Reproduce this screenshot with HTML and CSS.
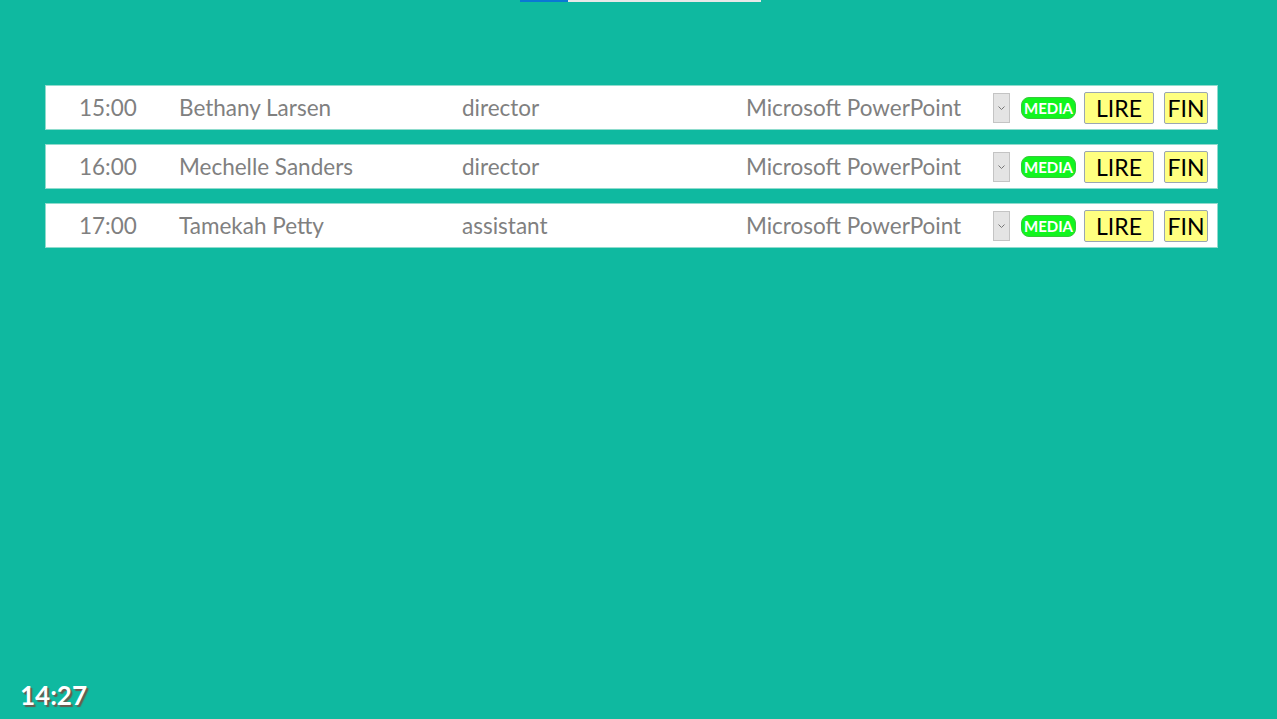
FILE: index.html
```html
<!DOCTYPE html>
<html>
<head>
<meta charset="utf-8">
<link rel="stylesheet" href="styles.css">
</head>
<body>
<div class="page">
  <div class="progress"><div class="done"></div><div class="rest"></div></div>
  <div class="list">
    <div class="row">
      <div class="time">15:00</div>
      <div class="name">Bethany Larsen</div>
      <div class="role">director</div>
      <div class="app">Microsoft PowerPoint</div>
      <div class="select"><svg width="9" height="6" viewBox="0 0 9 6"><path d="M1.5 1.5 L4.5 4.5 L7.5 1.5" fill="none" stroke="#777" stroke-width="1"/></svg></div>
      <div class="media">MEDIA</div>
      <div class="btn lire">LIRE</div>
      <div class="btn fin">FIN</div>
    </div>
    <div class="row">
      <div class="time">16:00</div>
      <div class="name">Mechelle Sanders</div>
      <div class="role">director</div>
      <div class="app">Microsoft PowerPoint</div>
      <div class="select"><svg width="9" height="6" viewBox="0 0 9 6"><path d="M1.5 1.5 L4.5 4.5 L7.5 1.5" fill="none" stroke="#777" stroke-width="1"/></svg></div>
      <div class="media">MEDIA</div>
      <div class="btn lire">LIRE</div>
      <div class="btn fin">FIN</div>
    </div>
    <div class="row">
      <div class="time">17:00</div>
      <div class="name">Tamekah Petty</div>
      <div class="role">assistant</div>
      <div class="app">Microsoft PowerPoint</div>
      <div class="select"><svg width="9" height="6" viewBox="0 0 9 6"><path d="M1.5 1.5 L4.5 4.5 L7.5 1.5" fill="none" stroke="#777" stroke-width="1"/></svg></div>
      <div class="media">MEDIA</div>
      <div class="btn lire">LIRE</div>
      <div class="btn fin">FIN</div>
    </div>
  </div>
  <div class="clock">14:27</div>
</div>
</body>
</html>
```
FILE: styles.css
```css
html, body {
  margin: 0;
  padding: 0;
  background: #0fb9a0;
}
.page {
  height: 719px;
  display: flex;
  flex-direction: column;
  font-family: "Lato", "Open Sans", sans-serif;
}
.progress {
  display: flex;
  height: 2px;
  margin-left: 520px;
  width: 241px;
}
.progress .done {
  width: 48px;
  background: #0a78d4;
}
.progress .rest {
  flex: 1;
  background: #e8e8e8;
}
.list {
  margin: 83px 59px 0 45px;
  display: flex;
  flex-direction: column;
  gap: 14px;
}
.row {
  height: 43px;
  background: #fff;
  border: 1px solid #8fdccd;
  display: flex;
  align-items: center;
  color: #808080;
  font-size: 22.5px;
  padding-right: 9px;
}
.time {
  width: 100px;
  padding-left: 33px;
}
.name {
  width: 283px;
}
.role {
  width: 284px;
}
.app {
  flex: 1;
}
.select {
  width: 15px;
  height: 28px;
  background: #e4e4e4;
  border: 1px solid #c4c4c4;
  display: flex;
  align-items: center;
  justify-content: center;
  margin-right: 11px;
}
.media {
  background: #11f51e;
  color: #fff;
  font-weight: 700;
  font-size: 15px;
  border-radius: 8px;
  border: 1px solid #38c93c;
  height: 20px;
  line-height: 20px;
  width: 53px;
  text-align: center;
  margin-right: 8px;
}
.btn {
  background: #ffff80;
  border: 1px solid #9aa6b2;
  border-radius: 2px;
  color: #000;
  height: 30px;
  line-height: 30px;
  text-align: center;
  font-size: 23px;
}
.lire {
  width: 68px;
  margin-right: 10px;
}
.fin {
  width: 42px;
}
.clock {
  margin-top: auto;
  margin-left: 20px;
  margin-bottom: 8px;
  color: #fff;
  font-weight: 700;
  font-size: 26px;
  text-shadow: 2px 2px 1px #6b5a4e;
}
```
